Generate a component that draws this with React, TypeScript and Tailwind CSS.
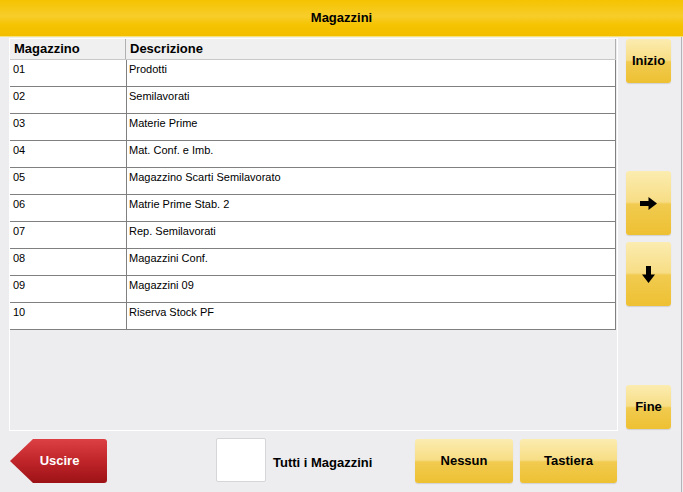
const rows = [
  ["01", "Prodotti"],
  ["02", "Semilavorati"],
  ["03", "Materie Prime"],
  ["04", "Mat. Conf. e Imb."],
  ["05", "Magazzino Scarti Semilavorato"],
  ["06", "Matrie Prime Stab. 2"],
  ["07", "Rep. Semilavorati"],
  ["08", "Magazzini Conf."],
  ["09", "Magazzini 09"],
  ["10", "Riserva Stock PF"],
]

const yellowBtn =
  "flex items-center justify-center rounded-[3px] shadow-[0_1px_1px_rgba(0,0,0,0.12)] bg-[linear-gradient(to_bottom,#fbecb0_0%,#f7dd85_48%,#f1cb50_52%,#eec032_100%)] text-[13px] font-bold text-black"

const App = () => {
  return (
    <div className="w-[683px] h-[492px] bg-[#ededf0] overflow-hidden font-['Liberation_Sans',Arial,sans-serif]">
      {/* titolo */}
      <div className="h-[37px] flex items-center justify-center border-b border-[#f8e27a] bg-[linear-gradient(to_bottom,#f5c300_0%,#f7cd2a_45%,#f5c300_70%,#f3be00_100%)]">
        <span className="text-[13px] font-bold text-black">Magazzini</span>
      </div>

      <div className="w-[682px] h-[455px] border-r border-[#b4b4b8] flex flex-col">
        <div className="flex h-[394px]">
          {/* griglia */}
          <div className="pl-[9px] pt-[1px]">
            <div className="w-[609px] h-[393px] border border-white bg-[#ededf0]">
              <div className="flex h-[21px] bg-[#f0f0f0] border-b border-[#c8c8c8] mr-[1px]">
                <div className="w-[116px] pl-[4px] text-[13px] font-bold leading-[20px] border-r border-[#b0b0b0]">Magazzino</div>
                <div className="flex-1 pl-[4px] text-[13px] font-bold leading-[20px] border-r border-[#b0b0b0]">Descrizione</div>
              </div>
              {rows.map(([code, desc]) => (
                <div key={code} className="flex h-[27px] bg-white border-b border-[#808080] mr-[1px]">
                  <div className="w-[116px] pl-[3px] pt-[1px] text-[11px] text-black">{code}</div>
                  <div className="flex-1 pl-[2px] pt-[1px] text-[11px] text-black border-l border-r border-[#808080]">{desc}</div>
                </div>
              ))}
            </div>
          </div>

          {/* pulsanti laterali */}
          <div className="flex-1 flex flex-col pl-[8px] pt-[2px] bg-[#eeeef0]">
            <button className={`${yellowBtn} w-[45px] h-[44px]`}>Inizio</button>
            <button className={`${yellowBtn} w-[45px] h-[64px] mt-[88px]`}>
              <svg width="19" height="15" viewBox="0 0 19 15">
                <path d="M1 5h8.5V1l8.5 6.5-8.5 6.5v-4H1z" fill="#000" />
              </svg>
            </button>
            <button className={`${yellowBtn} w-[45px] h-[64px] mt-[7px]`}>
              <svg width="15" height="19" viewBox="0 0 15 19">
                <path d="M5 1h5v8.5h4l-6.5 8.5L1 9.5h4z" fill="#000" />
              </svg>
            </button>
            <button className={`${yellowBtn} w-[45px] h-[44px] mt-[79px]`}>Fine</button>
          </div>
        </div>

        {/* barra inferiore */}
        <div className="flex items-start pt-[8px]">
          <button className="ml-[10px] w-[97px] h-[44px] rounded-r-[3px] [clip-path:polygon(23px_0,100%_0,100%_100%,23px_100%,0_50%)] bg-[linear-gradient(to_bottom,#dc4044_0%,#c0252a_50%,#9c1216_100%)] text-white text-[13px] font-bold pl-[2px]">
            Uscire
          </button>
          <div className="ml-[109px] -mt-[1px] w-[50px] h-[44px] bg-white border border-[#d6d6d8] rounded-[2px]" />
          <span className="ml-[7px] mt-[14px] w-[142px] text-[13px] font-bold text-black">Tutti i Magazzini</span>
          <button className={`${yellowBtn} w-[98px] h-[44px]`}>Nessun</button>
          <button className={`${yellowBtn} ml-[7px] w-[97px] h-[44px]`}>Tastiera</button>
        </div>
      </div>
    </div>
  )
}

export default App
